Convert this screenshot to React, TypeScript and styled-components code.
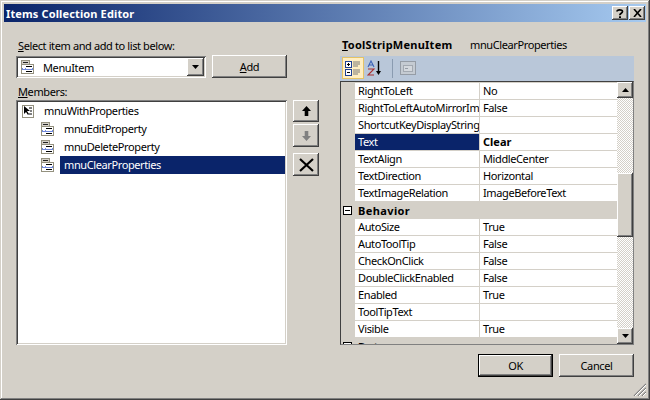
import React from "react";
import styled, { createGlobalStyle, css } from "styled-components";

const Global = createGlobalStyle`
  html, body { margin: 0; padding: 0; background: #d4d0c8; }
  * { box-sizing: border-box; }
`;

const bevel = css`
  background: #d4d0c8;
  box-shadow: inset -1px -1px #404040, inset 1px 1px #fff, inset -2px -2px #808080, inset 2px 2px #d4d0c8;
`;
const sunken = css`
  box-shadow: inset 1px 1px #808080, inset -1px -1px #fff, inset 2px 2px #404040, inset -2px -2px #d4d0c8;
`;

const Dialog = styled.div`
  position: relative;
  width: 650px;
  height: 400px;
  padding: 4px;
  background: #d4d0c8;
  font-family: "Noto Sans", Tahoma, sans-serif;
  font-size: 11px;
  letter-spacing: -0.39px;
  color: #000;
  overflow: hidden;
  box-shadow: inset -1px -1px #404040, inset 1px 1px #d4d0c8, inset -2px -2px #808080, inset 2px 2px #fff;
`;
const TitleBar = styled.div`
  height: 18px;
  display: flex;
  align-items: center;
  justify-content: space-between;
  padding: 0 1px 0 2px;
  background: linear-gradient(90deg, #0a246a, #a6caf0);
  color: #fff;
  font-weight: 700;
  font-size: 11px;
  letter-spacing: 0.13px;
`;
const TitleButtons = styled.div`
  display: flex;
  gap: 1px;
`;
const TitleButton = styled.div`
  ${bevel};
  width: 16px;
  height: 14px;
  display: flex;
  align-items: center;
  justify-content: center;
  color: #000;
`;
const Content = styled.div`
  display: flex;
  gap: 21px;
  padding: 17px 12px 0;
`;
const LeftPane = styled.div`
  width: 303px;
`;
const RightPane = styled.div`
  width: 294px;
`;
const Label = styled.div<{ $gap?: number }>`
  height: 13px;
  line-height: 13px;
  margin-top: ${(p) => p.$gap ?? 0}px;
  padding-left: 2px;
  white-space: nowrap;
`;
const PickerRow = styled.div`
  display: flex;
  gap: 6px;
  margin-top: 3px;
  width: 271px;
  height: 23px;
`;
const Combo = styled.div`
  ${sunken};
  width: 190px;
  height: 22px;
  margin-top: 1px;
  background: #fff;
  display: flex;
  align-items: center;
  padding: 0 2px 0 5px;
  gap: 9px;
`;
const ComboText = styled.span`
  flex: 1;
`;
const ComboArrow = styled.div`
  ${bevel};
  width: 17px;
  height: 18px;
  display: flex;
  align-items: center;
  justify-content: center;
`;
const PushButton = styled.div<{ $default?: boolean }>`
  ${bevel};
  width: 75px;
  height: 23px;
  display: flex;
  align-items: center;
  justify-content: center;
  ${(p) =>
    p.$default &&
    css`
      box-shadow: inset 0 0 0 1px #000, inset -2px -2px #404040, inset 2px 2px #fff, inset -3px -3px #808080;
    `}
`;
const MembersRow = styled.div`
  display: flex;
  gap: 6px;
  margin-top: 2px;
`;
const ListBox = styled.div`
  ${sunken};
  width: 271px;
  height: 245px;
  background: #fff;
  padding: 2px;
`;
const ListRow = styled.div<{ $child?: boolean }>`
  height: 18px;
  display: flex;
  align-items: center;
  padding-left: ${(p) => (p.$child ? 23 : 4)}px;
`;
const ListText = styled.span<{ $selected?: boolean; $child?: boolean }>`
  flex: 1;
  height: 18px;
  line-height: 18px;
  padding-left: 4px;
  margin-left: ${(p) => (p.$child ? 6 : 5)}px;
  background: ${(p) => (p.$selected ? "#0a246a" : "transparent")};
  color: ${(p) => (p.$selected ? "#fff" : "#000")};
`;
const SideButtons = styled.div`
  display: flex;
  flex-direction: column;
  width: 26px;
`;
const SideButton = styled.div<{ $top: number; $h: number }>`
  ${bevel};
  width: 26px;
  height: ${(p) => p.$h}px;
  margin-top: ${(p) => p.$top}px;
  display: flex;
  align-items: center;
  justify-content: center;
`;
const PropHeader = styled.div`
  height: 13px;
  line-height: 11px;
  padding-left: 2px;
  display: flex;
  white-space: nowrap;
`;
const PropType = styled.b`
  width: 128px;
  font-weight: 700;
  letter-spacing: 0.25px;
`;
const Toolbar = styled.div`
  height: 25px;
  margin-top: 4px;
  background: #b9c7d9;
  display: flex;
  align-items: flex-start;
  padding: 1px 0 0 2px;
`;
const ToolButton = styled.div<{ $active?: boolean }>`
  width: 22px;
  height: 22px;
  display: flex;
  align-items: center;
  justify-content: center;
  ${(p) => p.$active && "background: #ffeec2; border: 1px solid #e5c365;"}
`;
const ToolSep = styled.div`
  width: 1px;
  height: 19px;
  background: #8a9bb0;
  margin: 2px 4px 0 6px;
`;
const Grid = styled.div`
  height: 264px;
  display: flex;
  background: #d4d0c8;
  border: 1px solid #808080;
  border-top-color: #404040;
  border-left-color: #404040;
  overflow: hidden;
`;
const Rows = styled.div`
  flex: 1;
  height: 262px;
  padding-top: 1px;
  overflow: hidden;
`;
const PropRow = styled.div`
  height: 17px;
  display: flex;
  line-height: 16px;
  padding-left: 14px;
`;
const PropName = styled.div<{ $selected?: boolean }>`
  width: 125px;
  padding-left: 3px;
  height: 16px;
  overflow: hidden;
  white-space: nowrap;
  border-right: 1px solid #d4d0c8;
  background: ${(p) => (p.$selected ? "#0a246a" : "#fff")};
  color: ${(p) => (p.$selected ? "#fff" : "#000")};
`;
const PropValue = styled.div<{ $bold?: boolean }>`
  flex: 1;
  height: 16px;
  padding-left: 3px;
  background: #fff;
  font-weight: ${(p) => (p.$bold ? 700 : 400)};
  letter-spacing: ${(p) => (p.$bold ? "0" : "inherit")};
`;
const GroupRow = styled.div`
  height: 17px;
  display: flex;
  align-items: center;
  gap: 6px;
  padding: 0 0 1px 2px;
  font-weight: 700;
  letter-spacing: 0.4px;
`;
const Scrollbar = styled.div`
  width: 16px;
  height: 262px;
  display: flex;
  flex-direction: column;
`;
const ScrollButton = styled.div`
  ${bevel};
  height: 16px;
  flex: none;
  display: flex;
  align-items: center;
  justify-content: center;
`;
const ScrollTrack = styled.div<{ $h: number }>`
  height: ${(p) => p.$h}px;
  flex: none;
  background: repeating-conic-gradient(#d4d0c8 0 25%, #fff 0 50%) 0 0 / 2px 2px;
`;
const ScrollThumb = styled.div`
  ${bevel};
  height: 64px;
  flex: none;
`;
const Footer = styled.div`
  display: flex;
  justify-content: flex-end;
  gap: 6px;
  margin-top: 9px;
  padding-right: 12px;
`;
const Grip = styled.svg`
  position: absolute;
  right: 4px;
  bottom: 4px;
`;
const IconSvg = styled.svg`
  flex: none;
`;

const MenuIcon = () => (
  <IconSvg width="13" height="14" viewBox="0 0 13 14">
    <rect x="0.5" y="0.5" width="8" height="4" fill="#d4d0c8" stroke="#94917f" />
    <rect x="2" y="2" width="5" height="1" fill="#222" />
    <rect x="0.5" y="4.5" width="12" height="9" fill="#fff" stroke="#94917f" />
    <rect x="5" y="6" width="6" height="1" fill="#000" />
    <rect x="1" y="8" width="11" height="2" fill="#7089dc" />
    <rect x="2" y="8" width="2" height="1" fill="#fff" />
    <rect x="5" y="8" width="6" height="1" fill="#fff" />
    <rect x="5" y="11" width="6" height="1" fill="#000" />
  </IconSvg>
);
const RootIcon = () => (
  <IconSvg width="13" height="13" viewBox="0 0 13 13">
    <rect x="0.5" y="0.5" width="11" height="12" fill="#fff" stroke="#94917f" />
    <path d="M2 1v8l2-2 2 3 1-1-2-3h3z" fill="#000" />
    <path d="M7 3h3M8 6h2M7 9h3" stroke="#000" />
  </IconSvg>
);
const Caret = ({ up }: { up?: boolean }) => (
  <svg width="7" height="4" viewBox="0 0 7 4">
    <path d={up ? "M3.5 0L7 4H0z" : "M0 0h7L3.5 4z"} fill="#000" />
  </svg>
);
const ArrowSvg = styled.svg<{ $down?: boolean }>`
  transform: ${(p) => (p.$down ? "scaleY(-1)" : "none")};
`;
const Arrow = ({ down, color }: { down?: boolean; color: string }) => (
  <ArrowSvg $down={down} width="9" height="10" viewBox="0 0 9 10">
    <path d="M4.5 0L9 5H6.3v5H2.7V5H0z" fill={color} />
  </ArrowSvg>
);

const topRows: [string, string, boolean?][] = [
  ["RightToLeft", "No"],
  ["RightToLeftAutoMirrorImage", "False"],
  ["ShortcutKeyDisplayString", ""],
  ["Text", "Clear", true],
  ["TextAlign", "MiddleCenter"],
  ["TextDirection", "Horizontal"],
  ["TextImageRelation", "ImageBeforeText"],
];
const behaviorRows: [string, string][] = [
  ["AutoSize", "True"],
  ["AutoToolTip", "False"],
  ["CheckOnClick", "False"],
  ["DoubleClickEnabled", "False"],
  ["Enabled", "True"],
  ["ToolTipText", ""],
  ["Visible", "True"],
];
const GroupBox = () => (
  <IconSvg width="9" height="9" viewBox="0 0 9 9">
    <rect x="0.5" y="0.5" width="8" height="8" fill="#fff" stroke="#000" />
    <path d="M2 4.5h5" stroke="#000" />
  </IconSvg>
);

export default function App() {
  return (
    <Dialog>
      <Global />
      <TitleBar>
        <span>Items Collection Editor</span>
        <TitleButtons>
          <TitleButton>
            <svg width="8" height="9" viewBox="0 0 8 9">
              <path d="M1 2.5C1 .5 6.5 .3 6.5 2.5c0 1.7-2.7 1.7-2.7 3.7" fill="none" stroke="#000" strokeWidth="1.7" />
              <rect x="3" y="7.3" width="2" height="1.7" fill="#000" />
            </svg>
          </TitleButton>
          <TitleButton>
            <svg width="9" height="8" viewBox="0 0 9 8">
              <path d="M1 0l7 8M8 0L1 8" fill="none" stroke="#000" strokeWidth="1.6" />
            </svg>
          </TitleButton>
        </TitleButtons>
      </TitleBar>
      <Content>
        <LeftPane>
          <Label>
            <u>S</u>elect item and add to list below:
          </Label>
          <PickerRow>
            <Combo>
              <MenuIcon />
              <ComboText>MenuItem</ComboText>
              <ComboArrow>
                <Caret />
              </ComboArrow>
            </Combo>
            <PushButton>
              <span>
                <u>A</u>dd
              </span>
            </PushButton>
          </PickerRow>
          <Label $gap={7}>
            <u>M</u>embers:
          </Label>
          <MembersRow>
            <ListBox>
              <ListRow>
                <RootIcon />
                <ListText>mnuWithProperties</ListText>
              </ListRow>
              <ListRow $child>
                <MenuIcon />
                <ListText $child>mnuEditProperty</ListText>
              </ListRow>
              <ListRow $child>
                <MenuIcon />
                <ListText $child>mnuDeleteProperty</ListText>
              </ListRow>
              <ListRow $child>
                <MenuIcon />
                <ListText $child $selected>
                  mnuClearProperties
                </ListText>
              </ListRow>
            </ListBox>
            <SideButtons>
              <SideButton $top={0} $h={22}>
                <Arrow color="#000" />
              </SideButton>
              <SideButton $top={2} $h={23}>
                <Arrow down color="#808080" />
              </SideButton>
              <SideButton $top={6} $h={23}>
                <svg width="15" height="14" viewBox="0 0 15 14">
                  <path d="M1 1l13 12M14 1L1 13" stroke="#000" strokeWidth="2.2" />
                </svg>
              </SideButton>
            </SideButtons>
          </MembersRow>
        </LeftPane>
        <RightPane>
          <PropHeader>
            <PropType>
              <u>T</u>oolStripMenuItem
            </PropType>
            <span>mnuClearProperties</span>
          </PropHeader>
          <Toolbar>
            <ToolButton $active>
              <svg width="16" height="16" viewBox="0 0 16 16">
                <rect x="0.5" y="1.5" width="6" height="6" fill="#fff" stroke="#1c3f94" />
                <rect x="0.5" y="9.5" width="6" height="6" fill="#fff" stroke="#1c3f94" />
                <path d="M2 4.5h3M3.5 3v3M2 12.5h3" stroke="#000" />
                <path d="M8 2h7M8 4h7M8 6h5M8 10h7M8 12h7M8 14h5" stroke="#7a7a7a" />
              </svg>
            </ToolButton>
            <ToolButton>
              <svg width="16" height="16" viewBox="0 0 16 16">
                <path d="M1 7l3-6 3 6M2 5h4" fill="none" stroke="#3a62b8" strokeWidth="1.1" />
                <path d="M1 9h6L1 15h6" fill="none" stroke="#a83030" strokeWidth="1.1" />
                <path d="M11.5 1v12" stroke="#000" strokeWidth="1.4" />
                <path d="M9 11h5l-2.5 4z" fill="#000" />
              </svg>
            </ToolButton>
            <ToolSep />
            <ToolButton>
              <svg width="16" height="16" viewBox="0 0 16 16">
                <rect x="0.5" y="1.5" width="15" height="13" fill="#c5cbd2" stroke="#959ca5" />
                <rect x="3.5" y="5.5" width="9" height="6" fill="#d4d8dd" stroke="#a3a9b1" />
                <path d="M5 8.5h3" stroke="#959ca5" />
              </svg>
            </ToolButton>
          </Toolbar>
          <Grid>
            <Rows>
              {topRows.map(([n, v, sel]) => (
                <PropRow key={n}>
                  <PropName $selected={sel}>{n}</PropName>
                  <PropValue $bold={sel}>{v}</PropValue>
                </PropRow>
              ))}
              <GroupRow>
                <GroupBox />
                <span>Behavior</span>
              </GroupRow>
              {behaviorRows.map(([n, v]) => (
                <PropRow key={n}>
                  <PropName>{n}</PropName>
                  <PropValue>{v}</PropValue>
                </PropRow>
              ))}
              <GroupRow>
                <GroupBox />
                <span>Data</span>
              </GroupRow>
            </Rows>
            <Scrollbar>
              <ScrollButton>
                <Caret up />
              </ScrollButton>
              <ScrollTrack $h={75} />
              <ScrollThumb />
              <ScrollTrack $h={91} />
              <ScrollButton>
                <Caret />
              </ScrollButton>
            </Scrollbar>
          </Grid>
        </RightPane>
      </Content>
      <Footer>
        <PushButton $default>OK</PushButton>
        <PushButton>Cancel</PushButton>
      </Footer>
      <Grip width="13" height="13" viewBox="0 0 13 13">
        <path d="M13 1L1 13M13 5L5 13M13 9L9 13" stroke="#808080" strokeWidth="1.2" />
        <path d="M13 2L2 13M13 6L6 13M13 10L10 13" stroke="#fff" />
      </Grip>
    </Dialog>
  );
}
